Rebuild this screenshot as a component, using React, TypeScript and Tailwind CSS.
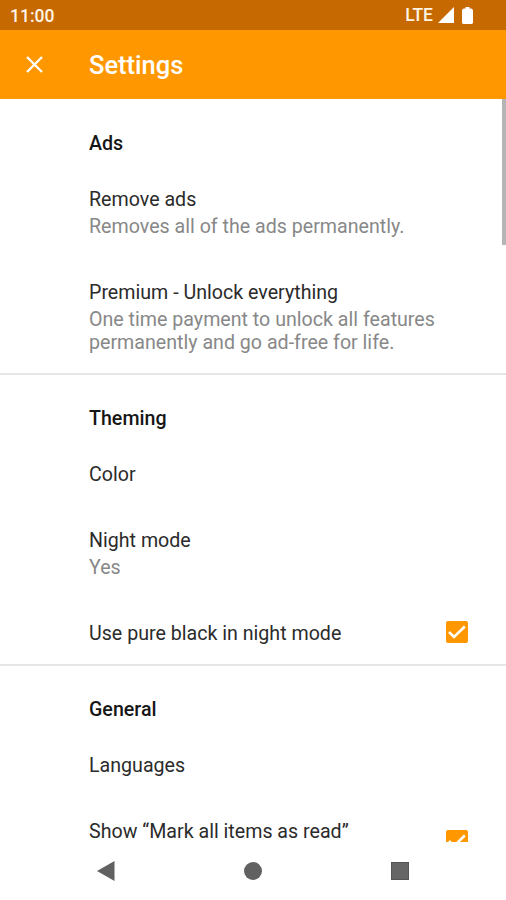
interface SettingItem {
  title: string
  summary?: string
  checked?: boolean
  tall?: boolean
}

interface SettingSection {
  title: string
  items: SettingItem[]
}

const sections: SettingSection[] = [
  {
    title: 'Ads',
    items: [
      { title: 'Remove ads', summary: 'Removes all of the ads permanently.' },
      {
        title: 'Premium - Unlock everything',
        summary: 'One time payment to unlock all features permanently and go ad-free for life.'
      }
    ]
  },
  {
    title: 'Theming',
    items: [
      { title: 'Color' },
      { title: 'Night mode', summary: 'Yes' },
      { title: 'Use pure black in night mode', checked: true }
    ]
  },
  {
    title: 'General',
    items: [
      { title: 'Languages' },
      { title: 'Show “Mark all items as read”', checked: true, tall: true }
    ]
  }
]

function StatusBar() {
  return (
    <div className="flex h-[30px] shrink-0 items-center bg-[#c66900] pl-[10px] pr-[33px] text-white">
      <span className="flex-1 pt-px text-[17.5px] font-medium leading-[30px] text-[#fff3e4]">11:00</span>
      <span className="mr-[5px] text-[17.5px] font-medium leading-[30px] text-[#fff3e4]">LTE</span>
      <svg className="mr-[8px] h-4 w-4" viewBox="0 0 16 16" fill="currentColor">
        <path d="M16 0v16H0z" />
      </svg>
      <svg className="h-[17px] w-[11px]" viewBox="0 0 11 17" fill="currentColor">
        <path d="M3.5 0h4v1.500H9.500L11 3v13l-1 1H1l-1-1V3l1.500-1.500h2z" />
      </svg>
    </div>
  )
}

function Toolbar() {
  return (
    <header className="flex h-[68.500px] shrink-0 items-center bg-[#ff9800] pl-[26px] text-white">
      <button aria-label="Close" className="mr-[46px]">
        <svg className="block h-[17px] w-[17px]" viewBox="0 0 17 17" fill="none" stroke="currentColor" strokeWidth="2.300">
          <path d="M1 1l15 15M16 1L1 16" />
        </svg>
      </button>
      <h1 className="pt-[2px] text-[25.500px] font-medium leading-[30px]">Settings</h1>
    </header>
  )
}

function Checkbox() {
  return (
    <svg className="-mt-[2px] mb-[2px] h-[22px] w-[22px] shrink-0" viewBox="0 0 22 22">
      <rect width="22" height="22" rx="2" fill="#ff9800" />
      <path d="M3 11l5 5L18.800 5.500" fill="none" stroke="#fff" strokeWidth="2.500" />
    </svg>
  )
}

function Item({ item }: { item: SettingItem }) {
  return (
    <li className="flex items-center justify-between pb-[21px] pt-[22px]">
      <div className={item.tall ? 'min-h-[46px] w-[350px]' : 'w-[350px]'}>
        <p className="text-[#2b2b2b]">{item.title}</p>
        {item.summary && <p className="mt-1 text-[#888]">{item.summary}</p>}
      </div>
      {item.checked && <Checkbox />}
    </li>
  )
}

function NavigationBar() {
  return (
    <nav className="flex h-[58px] shrink-0 items-center justify-between bg-white pl-[97px] pr-[97px] text-[#616161]">
      <svg className="h-5 w-[18px]" viewBox="0 0 18 20" fill="currentColor">
        <path d="M17.500 0v20L0 10z" />
      </svg>
      <svg className="h-[18px] w-[18px]" viewBox="0 0 18 18" fill="currentColor">
        <circle cx="9" cy="9" r="9" />
      </svg>
      <svg className="h-[18px] w-[18px]" viewBox="0 0 18 18">
        <rect x="0.500" y="0.500" width="17" height="17" fill="#666" stroke="#555" />
      </svg>
    </nav>
  )
}

export default function App() {
  return (
    <div className="flex h-[900px] w-[506px] flex-col overflow-hidden bg-white font-['Roboto',sans-serif]">
      <StatusBar />
      <Toolbar />
      <main className="relative min-h-0 flex-1 overflow-hidden text-[19.640px] leading-[23px]">
        {sections.map((section, i) => (
          <section key={section.title} className={i === 0 ? 'pt-[1.500px]' : 'border-t-2 border-[#e6e6e6]'}>
            <h2 className="pb-[11px] pl-[89px] pt-8 font-medium text-[#161616]">{section.title}</h2>
            <ul className="-mb-[2px] pl-[89px] pr-[38px]">
              {section.items.map((item) => (
                <Item key={item.title} item={item} />
              ))}
            </ul>
          </section>
        ))}
        {/* Scroll indicator */}
        <div className="absolute right-0 top-0 h-[146px] w-[4.500px] bg-[#b5b5b5]" />
      </main>
      <NavigationBar />
    </div>
  )
}
